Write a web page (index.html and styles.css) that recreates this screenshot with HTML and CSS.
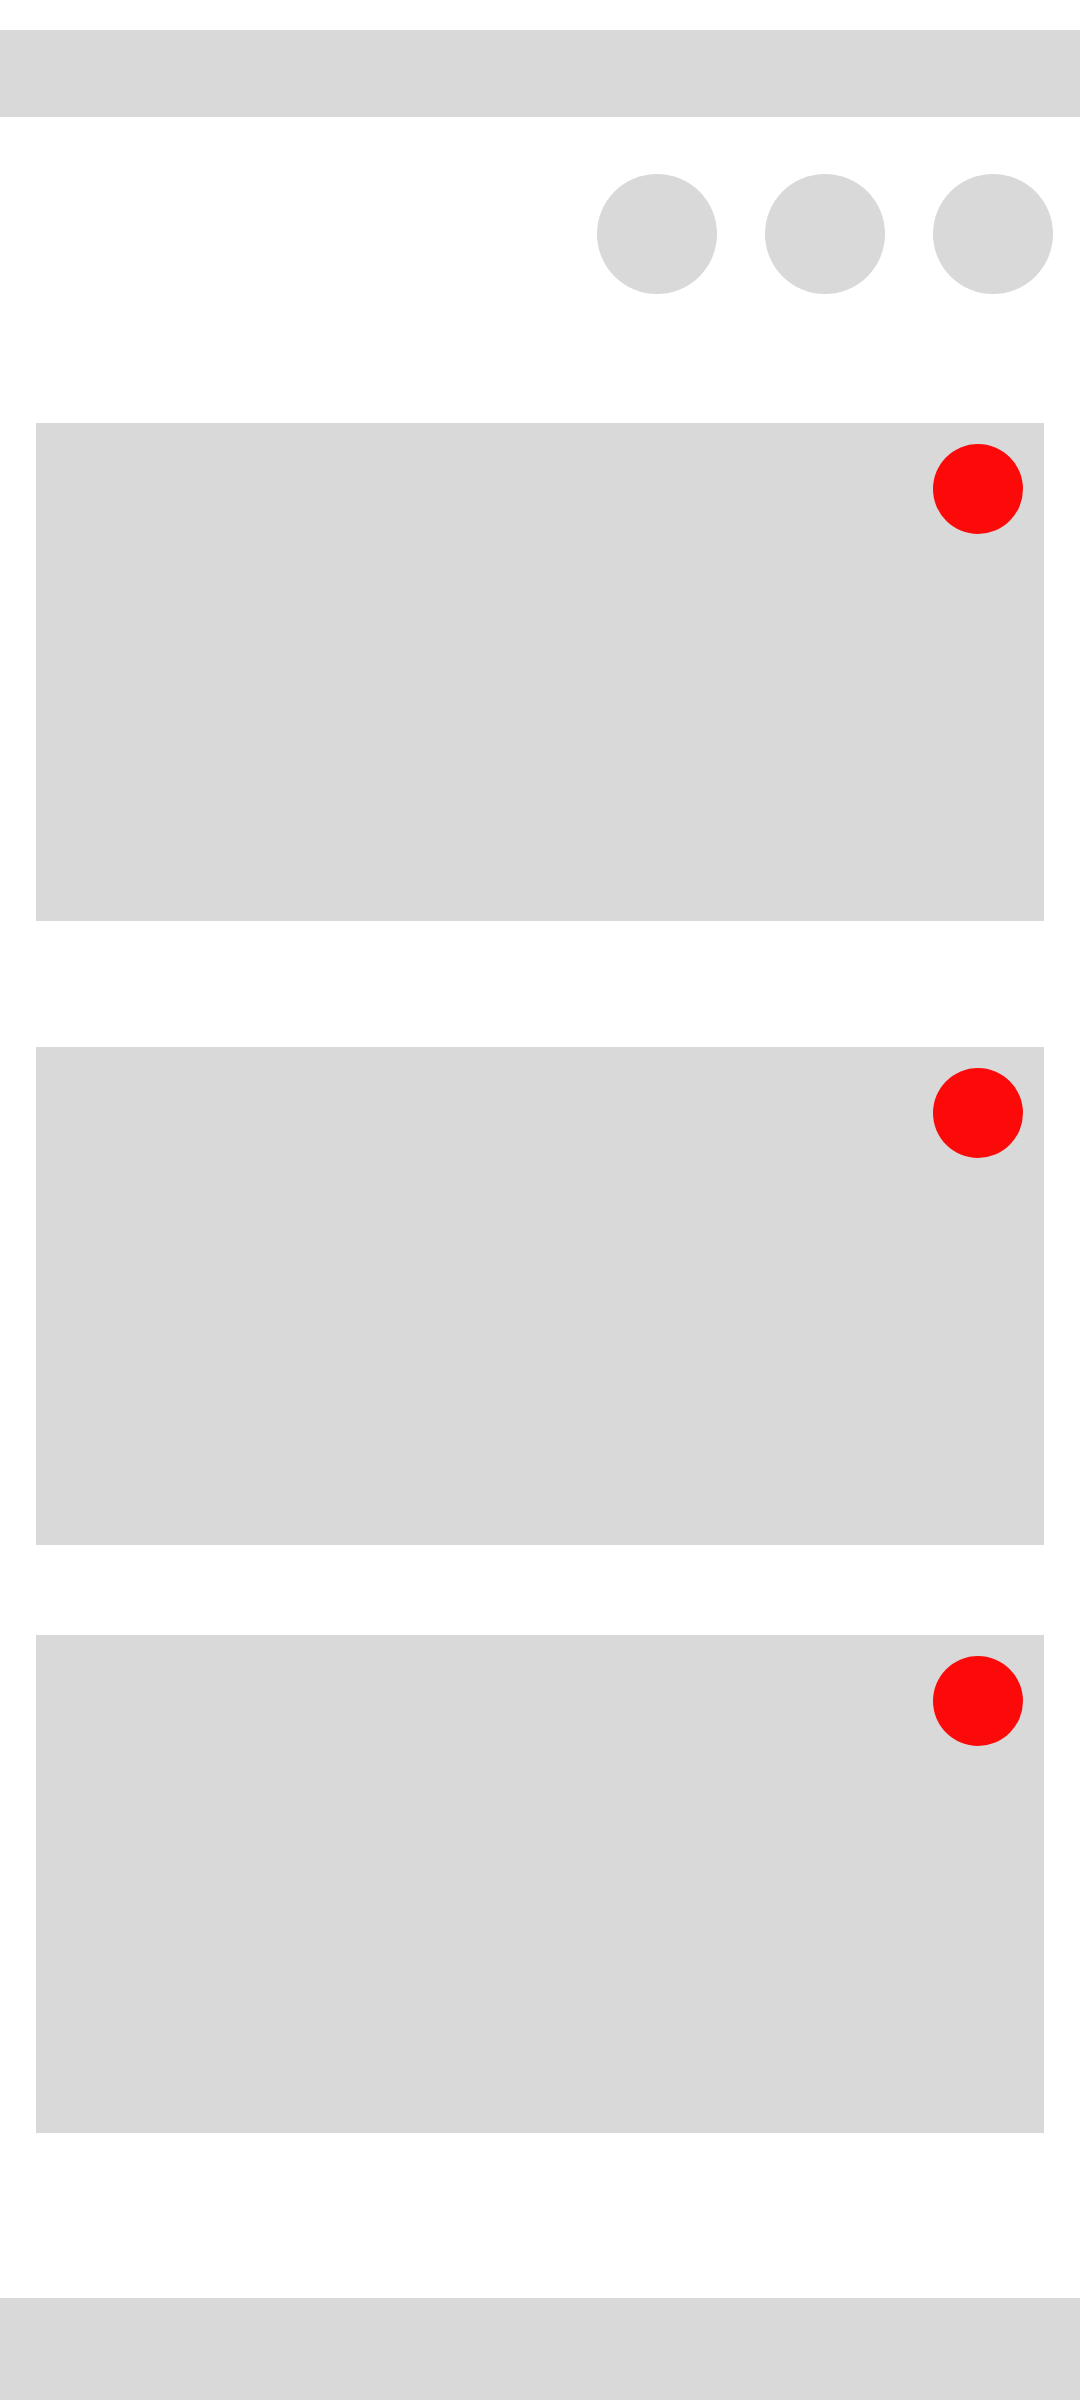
FILE: index.html
```html
<!DOCTYPE html>
<html>
<head>
<meta charset="utf-8">
<link rel="stylesheet" href="styles.css">
</head>
<body>
<div class="page">
  <header class="topbar"></header>
  <div class="actions">
    <span class="circle"></span>
    <span class="circle"></span>
    <span class="circle"></span>
  </div>
  <main class="cards">
    <div class="card first"><span class="dot"></span></div>
    <div class="card second"><span class="dot"></span></div>
    <div class="card third"><span class="dot"></span></div>
  </main>
  <footer class="bottombar"></footer>
</div>
</body>
</html>
```
FILE: styles.css
```css
html, body {
  margin: 0;
  padding: 0;
  background: #ffffff;
}
.page {
  display: flex;
  flex-direction: column;
  min-height: 2400px;
  padding-top: 30px;
  box-sizing: border-box;
}
.topbar {
  height: 87px;
  background: #d9d9d9;
}
.actions {
  display: flex;
  justify-content: flex-end;
  gap: 48px;
  padding-right: 27px;
  margin-top: 57px;
}
.circle {
  width: 120px;
  height: 120px;
  border-radius: 50%;
  background: #d9d9d9;
}
.cards {
  display: flex;
  flex-direction: column;
  padding: 0 36px;
  margin-top: 129px;
}
.card {
  position: relative;
  height: 498px;
  background: #d9d9d9;
}
.second {
  margin-top: 126px;
}
.third {
  margin-top: 90px;
}
.dot {
  position: absolute;
  top: 21px;
  right: 21px;
  width: 90px;
  height: 90px;
  border-radius: 50%;
  background: #fc0a0a;
}
.bottombar {
  margin-top: auto;
  height: 102px;
  background: #d9d9d9;
}
```
